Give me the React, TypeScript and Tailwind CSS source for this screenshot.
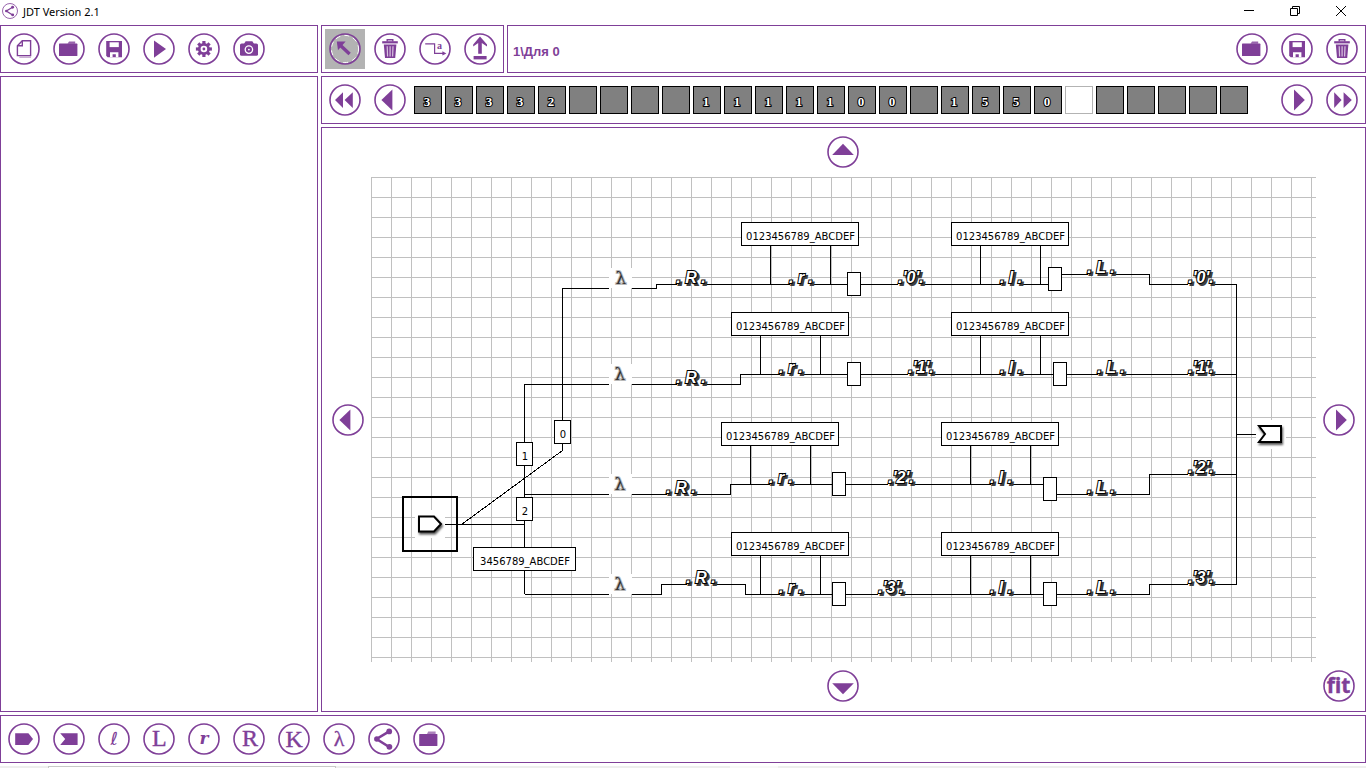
import React from "react";

const PURPLE = "#7f3f98";

type IconName =
  | "new" | "folder" | "save" | "play" | "gear" | "camera"
  | "cursor" | "trash" | "step" | "upload"
  | "rewind" | "left" | "right" | "forward" | "up" | "down" | "fit"
  | "start" | "end" | "l" | "L" | "r" | "R" | "K" | "lambda" | "share" | "folderSmall";

const SERIF = "'Liberation Serif', serif";

function Glyph({ x, y, size, children, bold, italic, weight = 0, font = SERIF }: {
  x: number; y: number; size: number; children: string; bold?: boolean; italic?: boolean; weight?: number; font?: string;
}) {
  return (
    <text
      x={x} y={y} fontSize={size} textAnchor="middle" fontFamily={font} fill={PURPLE}
      stroke={PURPLE} strokeWidth={weight}
      fontWeight={bold ? 700 : 400} fontStyle={italic ? "italic" : "normal"}
    >
      {children}
    </text>
  );
}

const shapes: Record<IconName, React.ReactNode> = {
  new: (
    <g fill="none" stroke={PURPLE} strokeWidth="1.4">
      <path d="M14.3 7.7H22.6V22.6H9.4V12.8Z" />
      <path d="M14.3 7.7V12.8H9.4" />
      <path d="M11.3 24.2H23" strokeWidth="0.6" />
    </g>
  ),
  folder: (
    <g>
      <path d="M14.5 10.7L16 8.4H22.2V10.7Z" opacity="0.8" />
      <rect x="6" y="10.6" width="18.4" height="12.4" rx="0.6" />
    </g>
  ),
  folderSmall: (
    <g>
      <path d="M14 11L15.2 8.4H22.6V11Z" opacity="0.65" />
      <rect x="6.2" y="11" width="18.2" height="12" rx="0.6" />
    </g>
  ),
  save: (
    <g>
      <path d="M8.2 8H24V24.2H9.6L8.2 22.8Z" />
      <rect x="11.6" y="9.3" width="9.2" height="4.8" fill="#fff" />
      <path d="M12 24.2V19.2H20.4V24.2H17.8V21.2H14.6V24.2Z" fill="#fff" />
    </g>
  ),
  play: <path d="M11 7.4L23 16L11 24.8Z" />,
  gear: (
    <g>
      {[0, 45, 90, 135].map((a) => (
        <rect key={a} x="14.3" y="8" width="3.2" height="16" transform={`rotate(${a} 15.9 16)`} />
      ))}
      <circle cx="15.9" cy="16" r="6" />
      <circle cx="15.9" cy="16" r="3.3" fill="#fff" />
      <circle cx="15.9" cy="16" r="1.4" />
    </g>
  ),
  camera: (
    <g>
      <rect x="7" y="10.4" width="18" height="12.4" rx="1.6" />
      <path d="M11 11L12.6 8.2H19.4L21 11Z" />
      <circle cx="15.9" cy="16.6" r="3.7" fill="none" stroke="#fff" strokeWidth="1.3" />
      <circle cx="15.9" cy="16.6" r="0.9" fill="#fff" />
    </g>
  ),
  cursor: (
    <g>
      <path d="M7.8 8.6H16.6L9 17.2Z" />
      <path d="M11 12L20.6 21" stroke={PURPLE} strokeWidth="3.4" />
    </g>
  ),
  trash: (
    <g>
      <rect x="8.2" y="8.2" width="15.6" height="2.2" />
      <path d="M13.2 8.4V6.8H18.8V8.4" fill="none" stroke={PURPLE} strokeWidth="1.4" />
      <path d="M9.8 11.4H22.4L21.2 25H11Z" />
      <path d="M13.2 13.2L13.6 23.4M16.1 13.2V23.4M19 13.2L18.6 23.4" stroke="#d9c5e0" strokeWidth="1.2" />
    </g>
  ),
  step: (
    <g>
      <path d="M6.2 10.8H15.6V20.4H25" fill="none" stroke={PURPLE} strokeWidth="1.2" />
      <path d="M23.4 18.2L27.4 20.4L23.4 22.6Z" />
      <Glyph x={20.4} y={16} size={10} bold>a</Glyph>
    </g>
  ),
  upload: (
    <g>
      <path d="M16 3.6L23 11.4V13.4L17.8 10V20.8H14.2V10L9.2 13.4V11.4Z" />
      <rect x="9.6" y="23" width="13" height="3.4" />
    </g>
  ),
  rewind: <path d="M6 16L14 8.2V24ZM15.6 16L23.8 8.2V24Z" />,
  forward: <path d="M8.2 8.2L15.6 16L8.2 24ZM17.6 8.2L25.8 16L17.6 24Z" />,
  left: <path d="M7.4 16L18.4 5.6V26.4Z" />,
  right: <path d="M13 5.6L23.8 16L13 26.6Z" />,
  up: <path d="M16 7.8L26.8 18.9H5.2Z" />,
  down: <path d="M5.2 13.2H26.8L16 24.2Z" />,
  fit: <Glyph x={15.6} y={23} size={21} bold weight={0.4} font="'Open Sans', sans-serif">fit</Glyph>,
  start: <path d="M7.2 10.2H20.4L25 16L20.4 22H7.2Z" />,
  end: <path d="M7.2 10.2H24.6V22H7.2L12.2 16Z" />,
  l: <Glyph x={16.2} y={22.4} size={18} italic font="'DejaVu Sans', sans-serif">ℓ</Glyph>,
  L: <Glyph x={16.4} y={23} size={24} weight={0.4}>L</Glyph>,
  r: <Glyph x={16} y={21} size={17} bold italic font="'DejaVu Serif', serif">r</Glyph>,
  R: <Glyph x={17} y={23} size={24} weight={0.4}>R</Glyph>,
  K: <Glyph x={16.2} y={23.6} size={24} weight={0.4}>K</Glyph>,
  lambda: <Glyph x={16} y={23} size={22} weight={0.3}>λ</Glyph>,
  share: (
    <g>
      <path d="M21.2 8.4L8.6 16L21.2 24" fill="none" stroke={PURPLE} strokeWidth="2.6" />
      <circle cx="21.2" cy="8.4" r="2.9" />
      <circle cx="8.8" cy="16" r="2.7" />
      <circle cx="21.4" cy="23.8" r="2.9" />
    </g>
  ),
};

function Icon({ name, active, className = "size-8" }: { name: IconName; active?: boolean; className?: string }) {
  return (
    <svg viewBox="0 0 32 32" className={className} fill={PURPLE} aria-hidden="true">
      {active && (
        <circle cx="16" cy="16" r="13.6" fill="none" stroke="#fff" strokeWidth="1" strokeDasharray="5 4" />
      )}
      <circle cx="16" cy="16" r="15" fill="none" stroke={PURPLE} strokeWidth="1.6" />
      {shapes[name]}
    </svg>
  );
}

function IconButton({ name, label, active }: { name: IconName; label: string; active?: boolean }) {
  return (
    <button
      type="button"
      aria-label={label}
      aria-pressed={active}
      className={active ? "block size-8 shrink-0 bg-[#b3b3b3] ring-4 ring-[#b3b3b3]" : "block size-8 shrink-0"}
    >
      <Icon name={name} active={active} />
    </button>
  );
}

type Tool = [IconName, string, boolean?];

function Tools({ items }: { items: Tool[] }) {
  return (
    <div className="flex items-center gap-[13px]">
      {items.map(([name, label, active]) => (
        <IconButton key={label} name={name} label={label} active={active} />
      ))}
    </div>
  );
}

const bar = "flex h-12 shrink-0 items-center border border-[#7f3f98] pr-[7px]";

const tape = ["3", "3", "3", "3", "2", "", "", "", "", "1", "1", "1", "1", "1", "0", "0", "", "1", "5", "5", "0", null, "", "", "", "", ""];

const wires = [
  "M562.5 450.5V288.5H609M632 288.5H656.5V284.5H1048M1061 274.5H1149.5V284.5H1236.5",
  "M524.5 594V384.5H609M632 384.5H740.5V374.5H1236.5",
  "M524.5 494.5H609M632 494.5H730.5V484.5H1043M1056 494.5H1149.5V474.5H1236.5",
  "M524.5 594.5H609M632 594.5H661.5V584.5H745.5V594.5H1149.5V584.5H1236.5",
  "M1236.5 284V585M1236.5 434.5H1256M445 524.5H524.5",
];

const lambdas = [[620, 268], [619, 364], [619, 474], [619, 574]];

const loops = [
  [741, 222], [951, 222], [731, 312], [951, 312],
  [721, 422], [941, 422], [731, 532], [941, 532],
];

const exits = [
  [847, 272], [1048, 267], [847, 362], [1053, 362],
  [832, 472], [1043, 477], [832, 582], [1043, 582],
];

const conditions: [number, number, number, string][] = [
  [554, 420, 16, "0"], [516, 442, 16, "1"], [516, 497, 16, "2"], [473, 547, 102, "3456789_ABCDEF"],
];

const symbols: [number, number, string][] = [
  [691, 284, "R"], [801, 284, "r"], [911, 284, "'0'"], [1011, 284, "l"], [1101, 274, "L"], [1201, 284, "'0'"],
  [691, 384, "R"], [791, 374, "r"], [921, 374, "'1'"], [1011, 374, "l"], [1111, 374, "L"], [1201, 374, "'1'"],
  [681, 494, "R"], [781, 484, "r"], [901, 484, "'2'"], [1001, 484, "l"], [1101, 494, "L"], [1201, 474, "'2'"],
  [701, 584, "R"], [791, 594, "r"], [891, 594, "'3'"], [1001, 594, "l"], [1101, 594, "L"], [1201, 584, "'3'"],
];

const halfWidth: Record<string, number> = { R: 14, r: 11, l: 10, L: 13 };

function LabelBox({ x, y, width, text }: { x: number; y: number; width: number; text: string }) {
  return (
    <g>
      <rect x={x + 0.5} y={y + 0.5} width={width} height="23" fill="#fff" stroke="#000" shapeRendering="crispEdges" />
      <text x={x + width / 2 + 1} y={y + 18} fontSize="10" textAnchor="middle" fontFamily="'DejaVu Sans', sans-serif">
        {text}
      </text>
    </g>
  );
}

function Diagram() {
  return (
    <svg className="h-full w-full" role="img" aria-label="Diagram">
      <g transform="translate(-371 -177)">
        <g fill="none" stroke="#000" shapeRendering="crispEdges">
          {wires.map((d) => <path key={d} d={d} />)}
          <path d="M562.5 450.5L461.5 524.5" />
          {loops.map(([x, y]) => (
            <path key={`${x}-${y}`} d={`M${x + 29.5} ${y + 23}V${y + 62}M${x + 89.5} ${y + 23}V${y + 62}`} />
          ))}
        </g>

        {lambdas.map(([x, y]) => (
          <g key={y}>
            <rect x="609" y={y} width="23" height="20" fill="#fff" />
            <text
              x={x + 1} y={y + 16} fontSize="17" textAnchor="middle" fontFamily="'DejaVu Serif', serif"
              fill="#333" stroke="#b8b8b8" strokeWidth="2" paintOrder="stroke"
            >
              λ
            </text>
          </g>
        ))}

        {loops.map(([x, y]) => (
          <LabelBox key={`${x}-${y}`} x={x} y={y} width={117} text="0123456789_ABCDEF" />
        ))}
        {exits.map(([x, y]) => (
          <rect key={`${x}-${y}`} x={x + 0.5} y={y + 0.5} width="13" height="23" fill="#fff" stroke="#000" shapeRendering="crispEdges" />
        ))}
        {conditions.map(([x, y, width, text]) => (
          <LabelBox key={text} x={x} y={y} width={width} text={text} />
        ))}

        {symbols.map(([x, y, s]) => {
          const half = halfWidth[s] ?? 13;
          const text = s.length > 1 ? `.${s}.` : `. ${s} .`;
          const common = {
            fontSize: 16, fontWeight: 700, fontStyle: "italic", textAnchor: "middle" as const,
            fontFamily: "'Liberation Sans', sans-serif", strokeWidth: 2, paintOrder: "stroke",
          };
          return (
            <g key={`${x}-${y}`}>
              <rect x={x - half} y={y} width={half * 2} height="1" fill="#fff" />
              <text x={x + 2} y={y + 1} fill="#404040" stroke="#404040" aria-hidden="true" {...common}>{text}</text>
              <text x={x} y={y - 1} fill="#fff" stroke="#000" {...common}>{text}</text>
            </g>
          );
        })}

        <rect x="403" y="497" width="54" height="54" fill="none" stroke="#000" strokeWidth="2" />
        <rect x="415" y="510" width="30" height="28" fill="#fff" />
        <g className="drop-shadow-[1px_2px_1px_#555]">
          <path d="M419 516.5H434L441 524L434 531.5H419Z" fill="#fff" stroke="#000" strokeWidth="2" />
        </g>
        <rect x="1256" y="420" width="30" height="29" fill="#fff" />
        <g className="drop-shadow-[1px_2px_1px_#555]">
          <path d="M1259 426H1281V442H1259L1265 434Z" fill="#fff" stroke="#000" strokeWidth="2" />
        </g>
      </g>
    </svg>
  );
}

function WindowButton({ label, children }: { label: string; children: React.ReactNode }) {
  return (
    <button type="button" aria-label={label} className="flex h-[21px] w-[46px] items-center justify-center">
      <svg viewBox="0 0 12 12" className="size-3" fill="none" stroke="#000" aria-hidden="true">{children}</svg>
    </button>
  );
}

export default function App() {
  return (
    <div className="flex h-screen flex-col gap-[3px] overflow-hidden bg-white font-['Liberation_Sans',sans-serif] text-black">
      <header className="flex h-[22px] shrink-0 items-start pl-0.5">
        <Icon name="share" className="mt-[3px] size-4" />
        <h1 className="ml-[5px] pt-1 font-['Noto_Sans',sans-serif] text-[11px] leading-4">JDT Version 2.1</h1>
        <div className="ml-auto flex pr-0.5">
          <WindowButton label="Minimize"><path d="M1 5.5H11" /></WindowButton>
          <WindowButton label="Restore"><path d="M1.5 3.5H8.5V10.5H1.5ZM3.5 3.5V1.5H10.5V8.5H8.5" /></WindowButton>
          <WindowButton label="Close"><path d="M1 1L11 11M11 1L1 11" /></WindowButton>
        </div>
      </header>

      <div className="flex min-h-0 flex-1 gap-[3px]">
        <aside className="flex w-[318px] shrink-0 flex-col gap-[3px]">
          <div className={`${bar} pl-[7px]`}>
            <Tools items={[["new", "New"], ["folder", "Open"], ["save", "Save"], ["play", "Run"], ["gear", "Settings"], ["camera", "Snapshot"]]} />
          </div>
          <div className="flex-1 border border-[#7f3f98]" />
        </aside>

        <main className="flex min-w-0 flex-1 flex-col gap-[3px]">
          <div className="flex gap-[3px]">
            <div className={`${bar} pl-[7px]`}>
              <Tools items={[["cursor", "Select", true], ["trash", "Delete"], ["step", "Label wire"], ["upload", "Level up"]]} />
            </div>
            <div className={`${bar} min-w-0 flex-1 justify-between pl-[5px]`}>
              <p className="pt-1.5 text-[13px] font-bold leading-5 text-[#7f3f98]">1\Для 0</p>
              <Tools items={[["folder", "Open diagram"], ["save", "Save diagram"], ["trash", "Delete diagram"]]} />
            </div>
          </div>

          <div className={`${bar} justify-between pl-[7px]`}>
            <div className="flex min-w-0 items-center gap-2">
              <Tools items={[["rewind", "Fast back"], ["left", "Back"]]} />
              <ol className="flex gap-[3px]">
                {tape.map((value, i) => (
                  <li
                    key={i}
                    className={
                      value === null
                        ? "size-7 border border-[#b3b3b3] bg-white"
                        : "flex size-7 items-center justify-center border border-black bg-[#808080] pr-0.5 pt-0.5 font-['Liberation_Serif',serif] text-[13px] font-bold leading-none text-white [-webkit-text-stroke:2px_black] [paint-order:stroke_fill]"
                    }
                  >
                    {value}
                  </li>
                ))}
              </ol>
            </div>
            <Tools items={[["right", "Forward"], ["forward", "Fast forward"]]} />
          </div>

          <section className="grid min-h-0 flex-1 grid-cols-[49px_1fr_49px] grid-rows-[49px_1fr_49px] place-items-center border border-[#7f3f98]">
            <div className="col-start-2 pb-0.5 pr-0.5"><IconButton name="up" label="Scroll up" /></div>
            <div className="col-start-1 row-start-2 pl-0.5"><IconButton name="left" label="Scroll left" /></div>
            <div className="col-start-2 row-start-2 h-full w-full overflow-hidden bg-[linear-gradient(to_right,#c0c0c0_1px,transparent_1px),linear-gradient(to_bottom,#c0c0c0_1px,transparent_1px)] bg-[size:20px_20px]">
              <Diagram />
            </div>
            <div className="col-start-3 row-start-2 pr-1"><IconButton name="right" label="Scroll right" /></div>
            <div className="col-start-2 row-start-3 pb-0.5 pr-0.5"><IconButton name="down" label="Scroll down" /></div>
            <div className="col-start-3 row-start-3 pb-0.5 pr-1"><IconButton name="fit" label="Fit to window" /></div>
          </section>
        </main>
      </div>

      <footer className={`${bar} pl-[7px]`}>
        <Tools
          items={[
            ["start", "Entry"], ["end", "Exit"], ["l", "Step left"], ["L", "Run left"], ["r", "Step right"],
            ["R", "Run right"], ["K", "Copy"], ["lambda", "Empty symbol"], ["share", "Branch"], ["folderSmall", "Library"],
          ]}
        />
      </footer>

      <div className="flex h-0.5 shrink-0 bg-[#eeeeee]">
        <div className="ml-12 w-72 border-x border-t border-[#c8c8c8] bg-white" />
        <div className="ml-[394px] w-12 bg-[#f8f8f8]" />
      </div>
    </div>
  );
}
